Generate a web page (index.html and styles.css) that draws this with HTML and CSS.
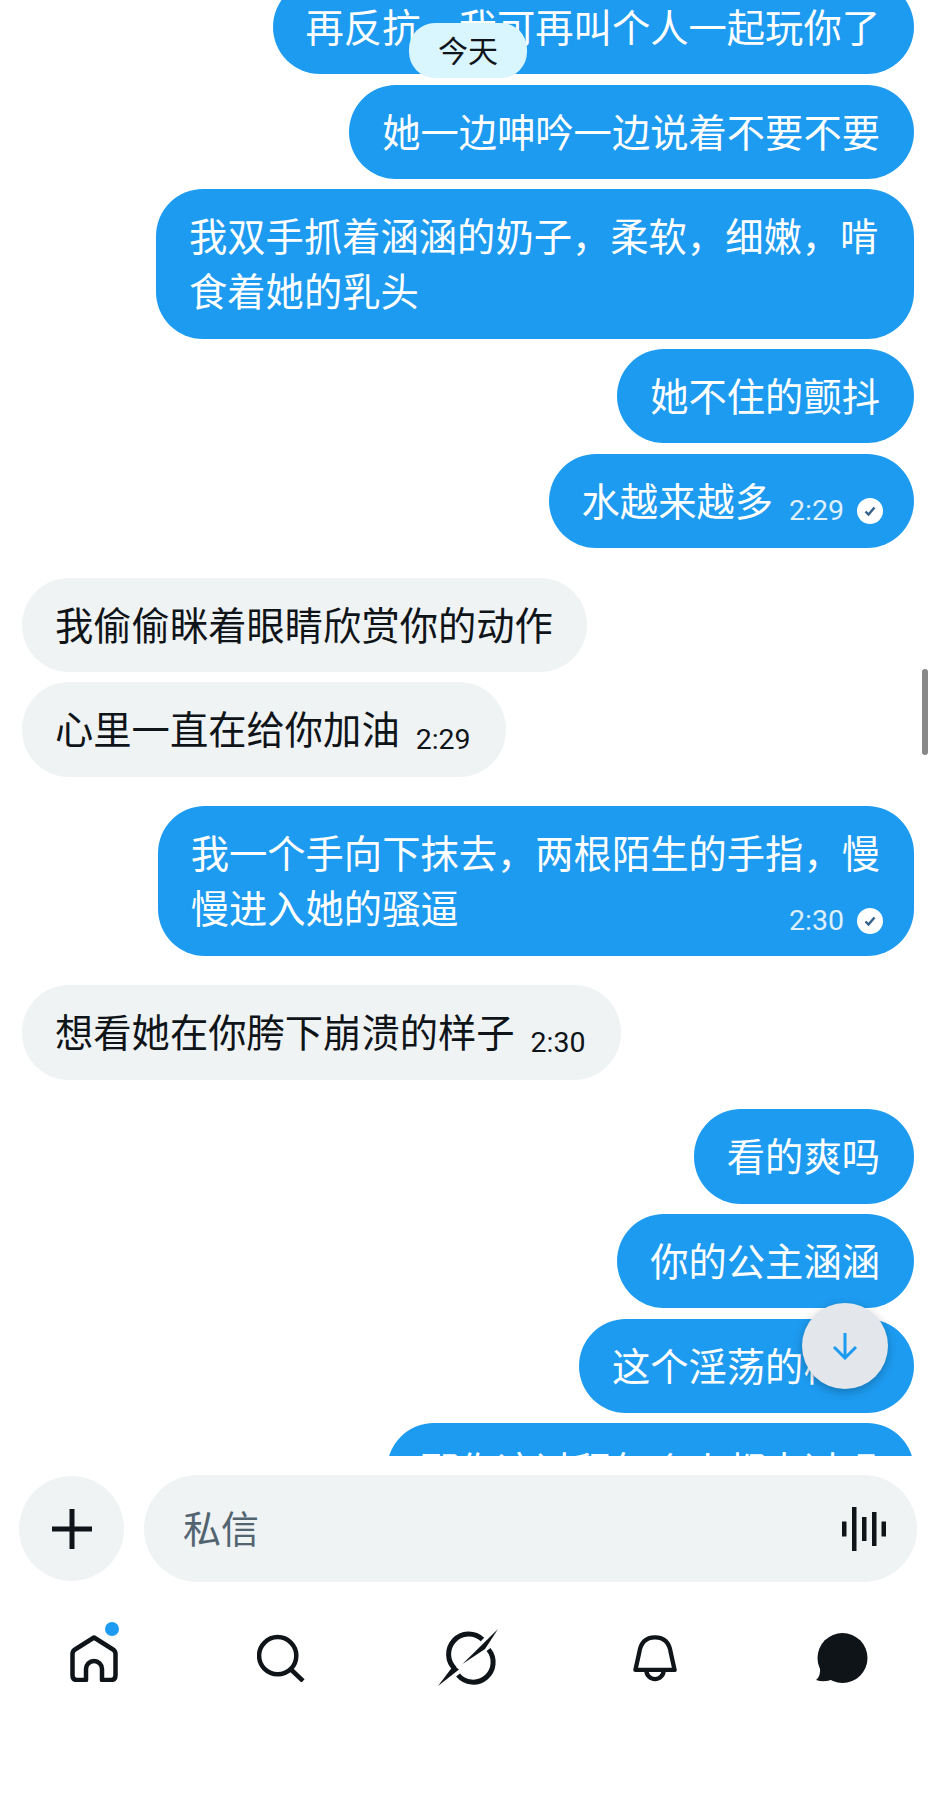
FILE: index.html
```html
<!DOCTYPE html>
<html lang="zh-CN">
<head>
    <meta charset="UTF-8">
    <meta name="viewport" content="width=device-width, initial-scale=1.0">
    <title>私信</title>
    <link rel="stylesheet" href="styles.css">
</head>
<body>

<div class="app">
    <!-- Conversation -->
    <div class="thread">
        <div class="messages">
            <div class="msg out">再反抗，我可再叫个人一起玩你了</div>
            <div class="msg out">她一边呻吟一边说着不要不要</div>
            <div class="msg out wide">我双手抓着涵涵的奶子，柔软，细嫩，啃食着她的乳头</div>
            <div class="msg out">她不住的颤抖</div>
            <div class="msg out has-meta">
                <span>水越来越多</span>
                <span class="meta"><span class="time">2:29</span>
                    <svg class="check" viewBox="0 0 26 26"><circle cx="13" cy="13" r="13" fill="#fff"/><path d="M8.5 13.5l3 3 6-7" fill="none" stroke="#33608a" stroke-width="2.4"/></svg>
                </span>
            </div>

            <div class="msg in new-group">我偷偷眯着眼睛欣赏你的动作</div>
            <div class="msg in has-meta">
                <span>心里一直在给你加油</span>
                <span class="meta"><span class="time">2:29</span></span>
            </div>

            <div class="msg out wide new-group">
                <div>我一个手向下抹去，两根陌生的手指，慢</div>
                <div class="last-line">
                    <span>慢进入她的骚逼</span>
                    <span class="meta"><span class="time">2:30</span>
                        <svg class="check" viewBox="0 0 26 26"><circle cx="13" cy="13" r="13" fill="#fff"/><path d="M8.5 13.5l3 3 6-7" fill="none" stroke="#33608a" stroke-width="2.4"/></svg>
                    </span>
                </div>
            </div>

            <div class="msg in new-group has-meta">
                <span>想看她在你胯下崩溃的样子</span>
                <span class="meta"><span class="time">2:30</span></span>
            </div>

            <div class="msg out new-group">看的爽吗</div>
            <div class="msg out">你的公主涵涵</div>
            <div class="msg out">这个淫荡的样子</div>
            <div class="msg out">那你这过程每个人都来过吗</div>
        </div>

        <div class="date-pill">今天</div>
        <div class="scrollbar"></div>
        <button class="to-bottom">
            <svg width="26" height="28" viewBox="0 0 26 28"><path d="M13 1v25M2 15l11 11 11-11" fill="none" stroke="#1d9bf0" stroke-width="3"/></svg>
        </button>
    </div>

    <!-- Message box -->
    <div class="composer">
        <button class="add">
            <svg width="40" height="40" viewBox="0 0 40 40"><path d="M20 0v40M0 20h40" stroke="#0f1419" stroke-width="5"/></svg>
        </button>
        <div class="input">
            <span class="placeholder">私信</span>
            <svg class="wave" width="44" height="44" viewBox="0 0 44 44" fill="#0f1419">
                <rect x="0" y="14.5" width="4.5" height="15"/>
                <rect x="10" y="0" width="4.5" height="44"/>
                <rect x="20" y="10" width="4.5" height="24"/>
                <rect x="30" y="5" width="4.5" height="34"/>
                <rect x="39.5" y="14.5" width="4.5" height="15"/>
            </svg>
        </div>
    </div>

    <!-- Bottom tabs -->
    <nav class="tabs">
        <div class="tab home">
            <svg width="48" height="48" viewBox="0 0 48 48"><path d="M24 3.500L43 15.500Q45.500 17 45.500 20V41Q45.500 46 41 46H32V35A8 8 0 0 0 16 35V46H7Q2.500 46 2.500 41V20Q2.500 17 5 15.500Z" fill="none" stroke="#0f1419" stroke-width="4.500" stroke-linejoin="round"/></svg>
            <span class="dot"></span>
        </div>
        <div class="tab">
            <svg width="48" height="48" viewBox="0 0 48 48"><circle cx="20.700" cy="21.700" r="18.600" fill="none" stroke="#0f1419" stroke-width="4.500"/><path d="M34.500 36L46 47" stroke="#0f1419" stroke-width="4.500"/></svg>
        </div>
        <div class="tab">
            <svg width="60" height="60" viewBox="0 0 60 60" fill="#0f1419"><path d="M44.500 11.500A18.500 18.500 0 0 0 17 41" fill="none" stroke="#0f1419" stroke-width="5"/><path d="M20 47A18.500 18.500 0 0 0 50.500 21.500" fill="none" stroke="#0f1419" stroke-width="5"/><path d="M60 1L24.500 36L47 21L49 18Z"/><path d="M0 58L21 41.500L15.500 37.500Z"/></svg>
        </div>
        <div class="tab">
            <svg width="44" height="48" viewBox="0 0 46 48"><path d="M2.500 36.500L6.500 18.500C8 8 14 2.500 23 2.500S38 8 39.500 18.500L43.500 36.500Z" fill="none" stroke="#0f1419" stroke-width="4.500" stroke-linejoin="round"/><path d="M14 37A9 9 0 0 0 32 37" fill="none" stroke="#0f1419" stroke-width="4.500"/></svg>
        </div>
        <div class="tab">
            <svg width="52" height="50" viewBox="0 0 52 50" fill="#0f1419"><circle cx="26.500" cy="25" r="25"/><path d="M4 34Q5 43 0 47Q9 50 17 46Z"/></svg>
        </div>
    </nav>
</div>

</body>
</html>
```

FILE: styles.css
```css
* {
    box-sizing: border-box;
}
body {
    margin: 0;
    background-color: #fff;
    color: #0f1419;
    font-family: "Noto Sans CJK SC", "Noto Sans", sans-serif;
}
button {
    padding: 0;
    border: none;
    font: inherit;
}
.app {
    width: 936px;
    height: 1800px;
    overflow: hidden;
}

/* conversation */
.thread {
    position: relative;
    height: 1456px;
    overflow: hidden;
}
.messages {
    display: flex;
    flex-direction: column;
    align-items: flex-start;
    margin-top: -20.2px;
    padding: 0 22px;
}
.msg {
    display: flex;
    align-items: center;
    flex: none;
    min-height: 94.5px;
    margin-top: 10.2px;
    padding: 18px 34px 21.5px 33px;
    border-radius: 47px;
    font-size: 38.3px;
    line-height: 55px;
}
.messages .msg:first-child {
    margin-top: 0;
}
.msg.new-group {
    margin-top: 29.5px;
}
.msg.out {
    align-self: flex-end;
    background-color: #1d9bf0;
    color: #fff;
}
.msg.in {
    background-color: #eff3f4;
}
.msg.in.has-meta {
    padding-right: 35px;
}
.msg.wide {
    display: block;
    max-width: 758px;
}
.msg.has-meta.out {
    padding-right: 31px;
}
.last-line {
    display: flex;
    align-items: center;
    justify-content: space-between;
    height: 55px;
    margin-right: -3px;
}
.last-line .meta {
    margin-top: 28px;
}
.meta {
    display: flex;
    align-items: center;
    gap: 13px;
    margin-top: 24px;
    margin-left: 16px;
    font-family: Roboto, sans-serif;
    font-size: 28.5px;
    line-height: 30px;
}
.out .time {
    opacity: 0.85;
}
.check {
    width: 26px;
    height: 26px;
}

/* things that float over the conversation */
.date-pill {
    position: absolute;
    top: 23px;
    left: 409px;
    width: 118px;
    height: 55px;
    padding-bottom: 3px;
    border-radius: 26px;
    background-color: #d9f5fd;
    font-size: 30px;
    line-height: 52px;
    text-align: center;
}
.scrollbar {
    position: absolute;
    top: 669px;
    left: 922px;
    width: 6px;
    height: 86px;
    border-radius: 3px;
    background-color: #888;
}
.to-bottom {
    position: absolute;
    top: 1303px;
    left: 802px;
    display: flex;
    align-items: center;
    justify-content: center;
    width: 86px;
    height: 86px;
    border-radius: 50%;
    background-color: #e3e7eb;
    box-shadow: 0 3px 10px rgba(0, 0, 0, 0.25);
}

/* message box */
.composer {
    display: flex;
    align-items: center;
    gap: 20px;
    padding: 19px 19px 0 19px;
}
.add {
    display: flex;
    align-items: center;
    justify-content: center;
    flex: none;
    width: 105px;
    height: 105px;
    border-radius: 50%;
    background-color: #eff3f4;
}
.input {
    display: flex;
    align-items: center;
    justify-content: space-between;
    flex: 1;
    height: 107px;
    padding: 0 31px 0 39px;
    border-radius: 54px;
    background-color: #eff3f4;
}
.placeholder {
    padding-bottom: 4px;
    color: #536471;
    font-size: 38px;
}

/* bottom tabs */
.tabs {
    display: grid;
    grid-template-columns: repeat(5, 1fr);
    margin-top: 46px;
}
.tab {
    position: relative;
    display: flex;
    align-items: center;
    justify-content: center;
    height: 60px;
}
.dot {
    position: absolute;
    top: -6px;
    left: 105px;
    width: 14px;
    height: 14px;
    border-radius: 50%;
    background-color: #1d9bf0;
}
```
